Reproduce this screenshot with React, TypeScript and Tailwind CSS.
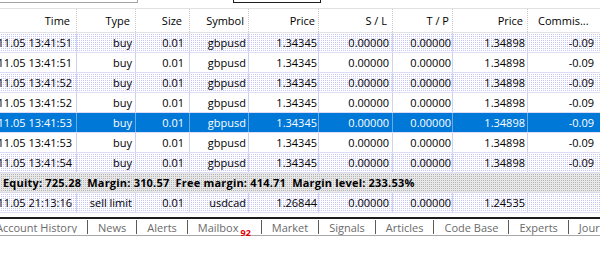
import { Fragment } from "react"

// column box widths + right padding, written out so Tailwind sees them
const colW = [
  "w-[77px] pr-[4px]",
  "w-[59px] pr-[3px]",
  "w-[54px] pr-[5px]",
  "w-[59px] pr-[2px]",
  "w-[70px] pr-[1px]",
  "w-[74px] pr-[3px]",
  "w-[60px] pr-[1px]",
  "w-[75px] pr-[2px]",
  "w-[72px] pr-[6px]",
]

const headers = ["Time", "Type", "Size", "Symbol", "Price", "S / L", "T / P", "Price", "Commis..."]

const positions = [
  ["2025.11.05 13:41:51", "buy", "0.01", "gbpusd", "1.34345", "0.00000", "0.00000", "1.34898", "-0.09"],
  ["2025.11.05 13:41:51", "buy", "0.01", "gbpusd", "1.34345", "0.00000", "0.00000", "1.34898", "-0.09"],
  ["2025.11.05 13:41:52", "buy", "0.01", "gbpusd", "1.34345", "0.00000", "0.00000", "1.34898", "-0.09"],
  ["2025.11.05 13:41:52", "buy", "0.01", "gbpusd", "1.34345", "0.00000", "0.00000", "1.34898", "-0.09"],
  ["2025.11.05 13:41:53", "buy", "0.01", "gbpusd", "1.34345", "0.00000", "0.00000", "1.34898", "-0.09"],
  ["2025.11.05 13:41:53", "buy", "0.01", "gbpusd", "1.34345", "0.00000", "0.00000", "1.34898", "-0.09"],
  ["2025.11.05 13:41:54", "buy", "0.01", "gbpusd", "1.34345", "0.00000", "0.00000", "1.34898", "-0.09"],
]

const pending = ["2025.11.05 21:13:16", "sell limit", "0.01", "usdcad", "1.26844", "0.00000", "0.00000", "1.24535", ""]

const tabs = ["News", "Alerts", "Mailbox", "Market", "Signals", "Articles", "Code Base", "Experts", "Journal"]

const dotted =
  "bg-white bg-[image:conic-gradient(from_90deg_at_1px_1px,#c6c6f6_90deg,#ffffff_0)] bg-[length:2px_2px]"

function Row({ cells, kind }: { cells: string[]; kind: "dots" | "plain" | "sel" }) {
  const rowBg =
    kind === "sel" ? "bg-[#0078d7] text-white" : kind === "dots" ? dotted : "bg-white"
  const line = kind === "sel" ? "border-[#6aa9e2]" : "border-[#d0d0f2]"
  return (
    <div className={`flex h-[20px] border-b border-[#dcdcf6] ${rowBg}`}>
      {cells.map((c, i) => (
        <div
          key={i}
          className={`flex shrink-0 items-center justify-end overflow-hidden whitespace-nowrap ${colW[i]} ${
            i < 8 ? `border-r ${line}` : ""
          }`}
        >
          {c}
        </div>
      ))}
    </div>
  )
}

function App() {
  return (
    <div className="w-[600px] h-[267px] overflow-hidden bg-white text-black text-[11px] leading-none font-['Open_Sans',sans-serif]">
      {/* bottoms of the inputs above */}
      <div className="flex h-[3px]">
        <div className="w-[138px] border-b border-r border-[#a3a3a3]" />
        <div className="ml-[95px] w-[88px] border-b border-x border-[#1e1e1e]" />
      </div>
      <div className="h-[5px]" />

      {/* header */}
      <div className="flex h-[25px] border-y border-[#e2e2e2]">
        {headers.map((h, i) => (
          <div
            key={i}
            className={`flex shrink-0 items-center overflow-hidden whitespace-nowrap ${colW[i]} ${
              i === 8 ? "justify-start pl-[10px]" : "justify-end border-r border-dotted border-[#c8c8c8]"
            }`}
          >
            <span className={i === 8 ? "" : "mr-[2px]"}>{h}</span>
          </div>
        ))}
      </div>

      {positions.map((r, i) => (
        <Row key={i} cells={r} kind={i === 4 ? "sel" : i % 2 === 0 ? "dots" : "plain"} />
      ))}

      {/* account summary */}
      <div className="flex h-[20px] items-center border-b border-[#d8d8e8] pl-[3px] font-bold tracking-[0.2px] whitespace-nowrap bg-[#e6e6e6] bg-[image:conic-gradient(from_90deg_at_1px_1px,#b4b4b4_90deg,#e8e8e8_0)] bg-[length:2px_2px]">
        Equity: 725.28&nbsp;&nbsp;Margin: 310.57&nbsp;&nbsp;Free margin: 414.71&nbsp;&nbsp;Margin level: 233.53%
      </div>

      <Row cells={pending} kind="dots" />

      <div className="h-[4px]" />

      {/* tabs */}
      <div className="flex h-[19px] items-center border-t-2 border-b border-t-[#1c1c1c] border-b-[#a8a8a8] whitespace-nowrap text-[#6a6a6a]">
        <div className="flex w-[87px] shrink-0 justify-end overflow-hidden pr-[10px]">Account History</div>
        {tabs.map((t) => (
          <Fragment key={t}>
            <span className="h-[14px] w-px shrink-0 bg-[#5c5c55]" />
            <span className="shrink-0 px-[10px]">
              {t}
              {t === "Mailbox" && (
                <span className="relative top-[4px] ml-[2px] text-[9px] font-bold text-[#e00000]">92</span>
              )}
            </span>
          </Fragment>
        ))}
      </div>
    </div>
  )
}

export default App
